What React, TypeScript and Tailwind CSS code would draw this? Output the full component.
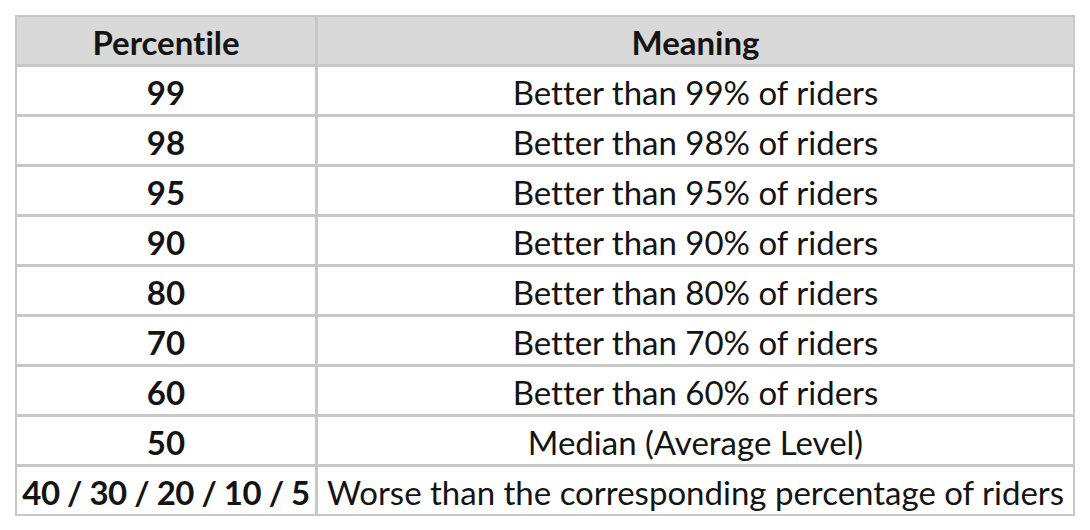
const rows = [
  ["99", "Better than 99% of riders"],
  ["98", "Better than 98% of riders"],
  ["95", "Better than 95% of riders"],
  ["90", "Better than 90% of riders"],
  ["80", "Better than 80% of riders"],
  ["70", "Better than 70% of riders"],
  ["60", "Better than 60% of riders"],
  ["50", "Median (Average Level)"],
  ["40 / 30 / 20 / 10 / 5", "Worse than the corresponding percentage of riders"],
];

export default function App() {
  return (
    <div className="h-[530px] w-[1090px] bg-white pl-[15px] pt-[15px] font-['Lato',sans-serif] text-[33px] text-[#141414] [font-variant-ligatures:none]">
      <div className="grid w-[1060px] grid-cols-[298px_1fr] auto-rows-[47px] gap-[3px] bg-[#c8c8c8] p-[2px]">
        <div className="flex items-center justify-center bg-[#d9d9d9] pt-[4px] font-bold">Percentile</div>
        <div className="flex items-center justify-center bg-[#d9d9d9] pt-[4px] font-bold">Meaning</div>
        {rows.map(([pct, meaning]) => (
          <>
            <div
              key={pct + "-p"}
              className={
                pct.length > 2
                  ? "flex items-center justify-center whitespace-nowrap bg-white pt-[4px] font-bold tracking-[-0.5px]"
                  : "flex items-center justify-center whitespace-nowrap bg-white pt-[4px] font-bold"
              }
            >
              {pct}
            </div>
            <div key={pct + "-m"} className="flex items-center justify-center whitespace-nowrap bg-white pt-[4px]">
              {meaning}
            </div>
          </>
        ))}
      </div>
    </div>
  );
}
